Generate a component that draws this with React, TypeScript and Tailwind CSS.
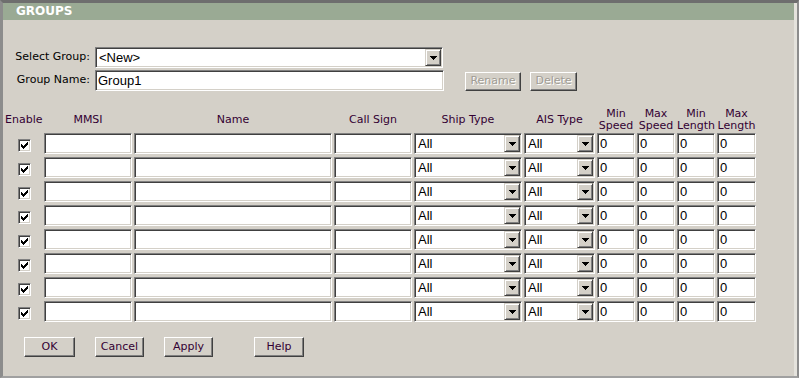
import React from 'react';

// 列の定義（幅はピクセル）
const columns = [
  { key: 'mmsi', label: ['MMSI'], width: 'w-[88px]', kind: 'text', value: '' },
  { key: 'name', label: ['Name'], width: 'w-[198px]', kind: 'text', value: '' },
  { key: 'call', label: ['Call Sign'], width: 'w-[78px]', kind: 'text', value: '' },
  { key: 'ship', label: ['Ship Type'], width: 'w-[108px]', kind: 'select', value: 'All' },
  { key: 'ais', label: ['AIS Type'], width: 'w-[71px]', kind: 'select', value: 'All' },
  { key: 'minSpeed', label: ['Min', 'Speed'], width: 'w-[38px]', kind: 'text', value: '0' },
  { key: 'maxSpeed', label: ['Max', 'Speed'], width: 'w-[38px]', kind: 'text', value: '0' },
  { key: 'minLen', label: ['Min', 'Length'], width: 'w-[38px]', kind: 'text', value: '0' },
  { key: 'maxLen', label: ['Max', 'Length'], width: 'w-[39px]', kind: 'text', value: '0' },
];

const sunken =
  'bg-white border border-t-[#808080] border-l-[#808080] border-b-white border-r-white shadow-[inset_1px_1px_0_#404040,inset_-1px_-1px_0_#d4d0c8]';
const raised =
  'bg-[#d4d0c8] border border-t-white border-l-white border-b-[#404040] border-r-[#404040] shadow-[inset_-1px_-1px_0_#808080]';
const fieldFont = "font-['Liberation_Sans',Arial,sans-serif] text-[13px] text-black";

const DropButton: React.FC = () => (
  <div
    className={`w-[16px] h-[17px] shrink-0 flex items-center justify-center bg-[#d4d0c8] border border-t-[#d4d0c8] border-l-[#d4d0c8] border-b-[#404040] border-r-[#404040] shadow-[inset_1px_1px_0_#fff,inset_-1px_-1px_0_#808080]`}
  >
    <svg width="7" height="4" viewBox="0 0 7 4" shapeRendering="crispEdges">
      <rect x="0" y="0" width="7" height="1" fill="#000" />
      <rect x="1" y="1" width="5" height="1" fill="#000" />
      <rect x="2" y="2" width="3" height="1" fill="#000" />
      <rect x="3" y="3" width="1" height="1" fill="#000" />
    </svg>
  </div>
);

const SelectBox: React.FC<{ value: string; className: string }> = ({ value, className }) => (
  <div className={`${sunken} ${className} h-[21px] p-[1px] flex items-center`}>
    <span className={`${fieldFont} flex-1 pl-[2px] leading-[17px] whitespace-nowrap overflow-hidden`}>{value}</span>
    <DropButton />
  </div>
);

const TextBox: React.FC<{ value: string; className: string }> = ({ value, className }) => (
  <div className={`${sunken} ${className} h-[21px] px-[2px] flex items-center`}>
    <span className={`${fieldFont} leading-[17px] whitespace-nowrap`}>{value}</span>
  </div>
);

const CheckBox: React.FC = () => (
  <div className={`${sunken} w-[13px] h-[13px] flex items-center justify-center`}>
    <svg width="7" height="7" viewBox="0 0 7 7" shapeRendering="crispEdges">
      <path d="M0 2h1v1h1v1h1V3h1V2h1V1h1V0h1v3H6v1H5v1H4v1H3v1H2V6H1V5H0z" fill="#000" />
    </svg>
  </div>
);

const Button: React.FC<{ label: string; className: string; disabled?: boolean }> = ({ label, className, disabled }) => (
  <div className={`${raised} ${className} flex items-center justify-center text-[11px]`}>
    <span
      className={
        disabled
          ? 'text-[#a09c94] [text-shadow:1px_1px_0_#fff]'
          : 'text-[#330033]'
      }
    >
      {label}
    </span>
  </div>
);

const App: React.FC = () => {
  const rows = Array.from({ length: 8 }, (_, i) => i);

  return (
    <div className="w-[799px] h-[378px] bg-[#d4d0c8] border-t-[3px] border-l-[3px] border-r-2 border-b-2 border-t-[#6e6e6e] border-l-[#8c8c8c] border-r-[#8c8c8c] border-b-[#a0a0a0] font-['DejaVu_Sans',Verdana,sans-serif] overflow-hidden">
      <div className="h-full flex flex-col border-r-[3px] border-r-[#e4e2dc]">
        {/* タイトルバー */}
        <div className="h-[17px] shrink-0 bg-[#9aaa94] pl-[13px] text-white font-bold text-[12px] leading-[17px]">
          GROUPS
        </div>

        {/* グループ選択 */}
        <div className="mt-[27px] flex items-center h-[21px]">
          <div className="w-[87px] text-right text-[11px] text-black whitespace-nowrap">Select Group:</div>
          <SelectBox value="<New>" className="ml-[5px] w-[348px]" />
        </div>
        <div className="mt-[2px] flex items-end h-[21px]">
          <div className="w-[87px] self-center text-right text-[11px] text-black whitespace-nowrap">Group Name:</div>
          <TextBox value="Group1" className="ml-[5px] w-[349px]" />
          <Button label="Rename" className="ml-[21px] w-[56px] h-[19px]" disabled />
          <Button label="Delete" className="ml-[9px] w-[47px] h-[19px]" disabled />
        </div>

        {/* 列見出し */}
        <div className="mt-[16px] h-[26px] flex items-center gap-[2px] text-[11px] leading-[12px] text-[#330033]">
          <div className="w-[39px] pl-[2px] whitespace-nowrap">Enable</div>
          {columns.map(col => (
            <div key={col.key} className={`${col.width} flex flex-col items-center whitespace-nowrap`}>
              {col.label.map(line => (
                <span key={line}>{line}</span>
              ))}
            </div>
          ))}
        </div>

        {/* 行 */}
        <div className="flex flex-col gap-[3px]">
          {rows.map(r => (
            <div key={r} className="h-[21px] flex gap-[2px]">
              <div className="w-[39px] pl-[15px] pt-[6px]">
                <CheckBox />
              </div>
              {columns.map(col =>
                col.kind === 'select' ? (
                  <SelectBox key={col.key} value={col.value} className={col.width} />
                ) : (
                  <TextBox key={col.key} value={col.value} className={col.width} />
                )
              )}
            </div>
          ))}
        </div>

        {/* 下部ボタン */}
        <div className="mt-[15px] flex">
          <Button label="OK" className="ml-[21px] w-[51px] h-[20px]" />
          <Button label="Cancel" className="ml-[20px] w-[49px] h-[20px]" />
          <Button label="Apply" className="ml-[20px] w-[49px] h-[20px]" />
          <Button label="Help" className="ml-[41px] w-[50px] h-[20px]" />
        </div>
      </div>
    </div>
  );
};

export default App;
